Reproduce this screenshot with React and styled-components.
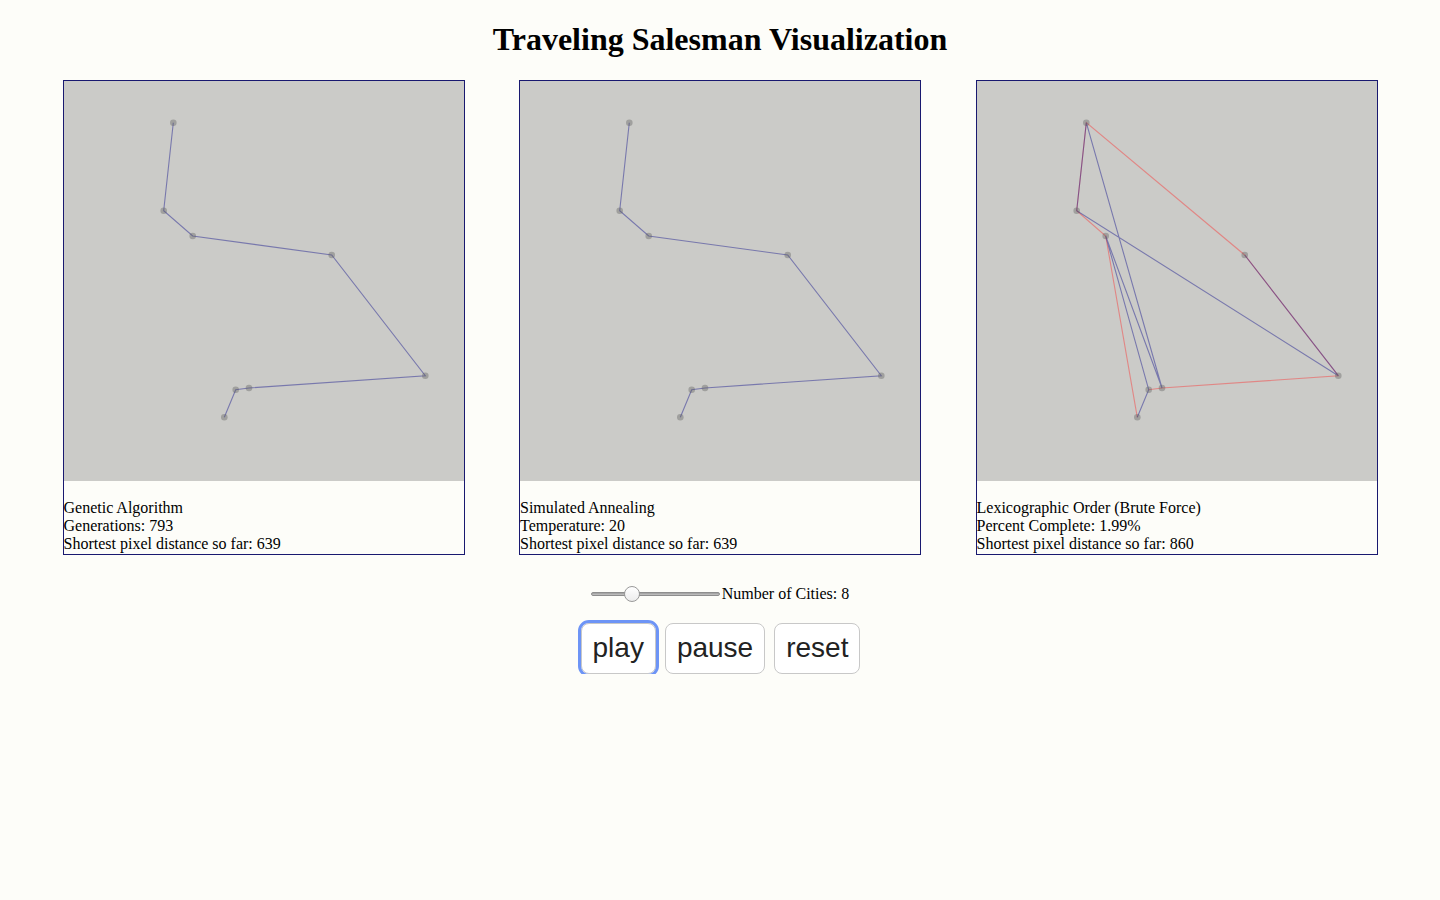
import React, { useState } from 'react'
import styled, { createGlobalStyle } from 'styled-components'

const cities = [
    [109.3, 41.7],
    [99.7, 129.7],
    [128.7, 155],
    [267.7, 174],
    [361.3, 294.7],
    [185, 307],
    [171.7, 308.7],
    [160.3, 336.3],
]

const panels = [
    {
        name: 'Genetic Algorithm',
        stat: 'Generations: 793',
        best: 639,
        paths: [{ order: [0, 1, 2, 3, 4, 5, 6, 7], color: 'rgba(20, 20, 140, 0.45)' }],
    },
    {
        name: 'Simulated Annealing',
        stat: 'Temperature: 20',
        best: 639,
        paths: [{ order: [0, 1, 2, 3, 4, 5, 6, 7], color: 'rgba(20, 20, 140, 0.45)' }],
    },
    {
        name: 'Lexicographic Order (Brute Force)',
        stat: 'Percent Complete: 1.99%',
        best: 860,
        paths: [
            { order: [7, 2, 1, 0, 3, 4, 5, 6], color: 'rgba(255, 40, 40, 0.42)' },
            { order: [3, 4, 1, 0, 5, 2, 6, 7], color: 'rgba(20, 20, 140, 0.45)' },
        ],
    },
]

function TourCanvas({ paths }) {
    return (
        <Canvas viewBox="0 0 400 400" width="400" height="400">
            {paths.map((p, i) => (
                <polyline
                    key={i}
                    points={p.order.map((c) => cities[c].join(',')).join(' ')}
                    fill="none"
                    stroke={p.color}
                    strokeWidth="1.1"
                />
            ))}
            {cities.map(([x, y], i) => (
                <circle key={i} cx={x} cy={y} r="3.3" fill="rgba(90, 90, 90, 0.38)" />
            ))}
        </Canvas>
    )
}

function App() {
    const [count, setCount] = useState(8)

    return (
        <>
            <GlobalStyle />
            <Title>Traveling Salesman Visualization</Title>
            <Panels>
                {panels.map((p) => (
                    <Panel key={p.name}>
                        <TourCanvas paths={p.paths} />
                        <Info>
                            {p.name}
                            <br />
                            {p.stat}
                            <br />
                            Shortest pixel distance so far: {p.best}
                        </Info>
                    </Panel>
                ))}
            </Panels>
            <SliderRow>
                <Range
                    type="range"
                    min="3"
                    max="20"
                    value={count}
                    onChange={(e) => setCount(Number(e.target.value))}
                />
                <span>Number of Cities: {count}</span>
            </SliderRow>
            <Buttons>
                <Button $focused>play</Button>
                <Button>pause</Button>
                <Button>reset</Button>
            </Buttons>
        </>
    )
}

export default App

const GlobalStyle = createGlobalStyle`
    body {
        margin: 8px;
        background: #fdfdf9;
        font-family: "Liberation Serif", "Times New Roman", serif;
        font-size: 16px;
        color: #000;
    }
`;

const Title = styled.h1`
    font-size: 32px;
    font-weight: bold;
    text-align: center;
    margin: 13.44px 0 21.44px;
`;

const Panels = styled.div`
    display: flex;
    justify-content: space-evenly;
`;

const Panel = styled.div`
    width: 400px;
    border: 1px solid #191970;
    display: flex;
    flex-direction: column;
`;

const Canvas = styled.svg`
    display: block;
    background: #cbcbc8;
`;

const Info = styled.div`
    margin-top: 18px;
    line-height: 18px;
    padding-bottom: 1px;
`;

const SliderRow = styled.div`
    display: flex;
    justify-content: center;
    align-items: center;
    margin-top: 30px;
    height: 18px;
`;

const Range = styled.input`
    -webkit-appearance: none;
    appearance: none;
    width: 129px;
    height: 16px;
    margin: 0 2px 0 0;
    background: transparent;
    &::-webkit-slider-runnable-track {
        height: 4px;
        border-radius: 2px;
        background: linear-gradient(#9c9c9c, #c4c4c4);
        border: 1px solid #8e8e8e;
    }
    &::-webkit-slider-thumb {
        -webkit-appearance: none;
        width: 16px;
        height: 16px;
        margin-top: -7px;
        border-radius: 50%;
        background: linear-gradient(#ffffff, #ececec);
        border: 1px solid #9a9a9a;
        box-sizing: border-box;
    }
`;

const Buttons = styled.div`
    display: flex;
    justify-content: center;
    gap: 9px;
    margin-top: 20px;
    padding-left: 1px;
`;

const Button = styled.button`
    font-family: "Liberation Sans", Arial, sans-serif;
    font-size: 28px;
    line-height: 34px;
    color: #222;
    background: #fff;
    border: 1px solid #c8c8c8;
    border-radius: 8px;
    padding: 7px 11px 8px;
    outline: ${(p) => (p.$focused ? '3px solid #6d94f6' : 'none')};
    outline-offset: 0;
    cursor: pointer;
`;
